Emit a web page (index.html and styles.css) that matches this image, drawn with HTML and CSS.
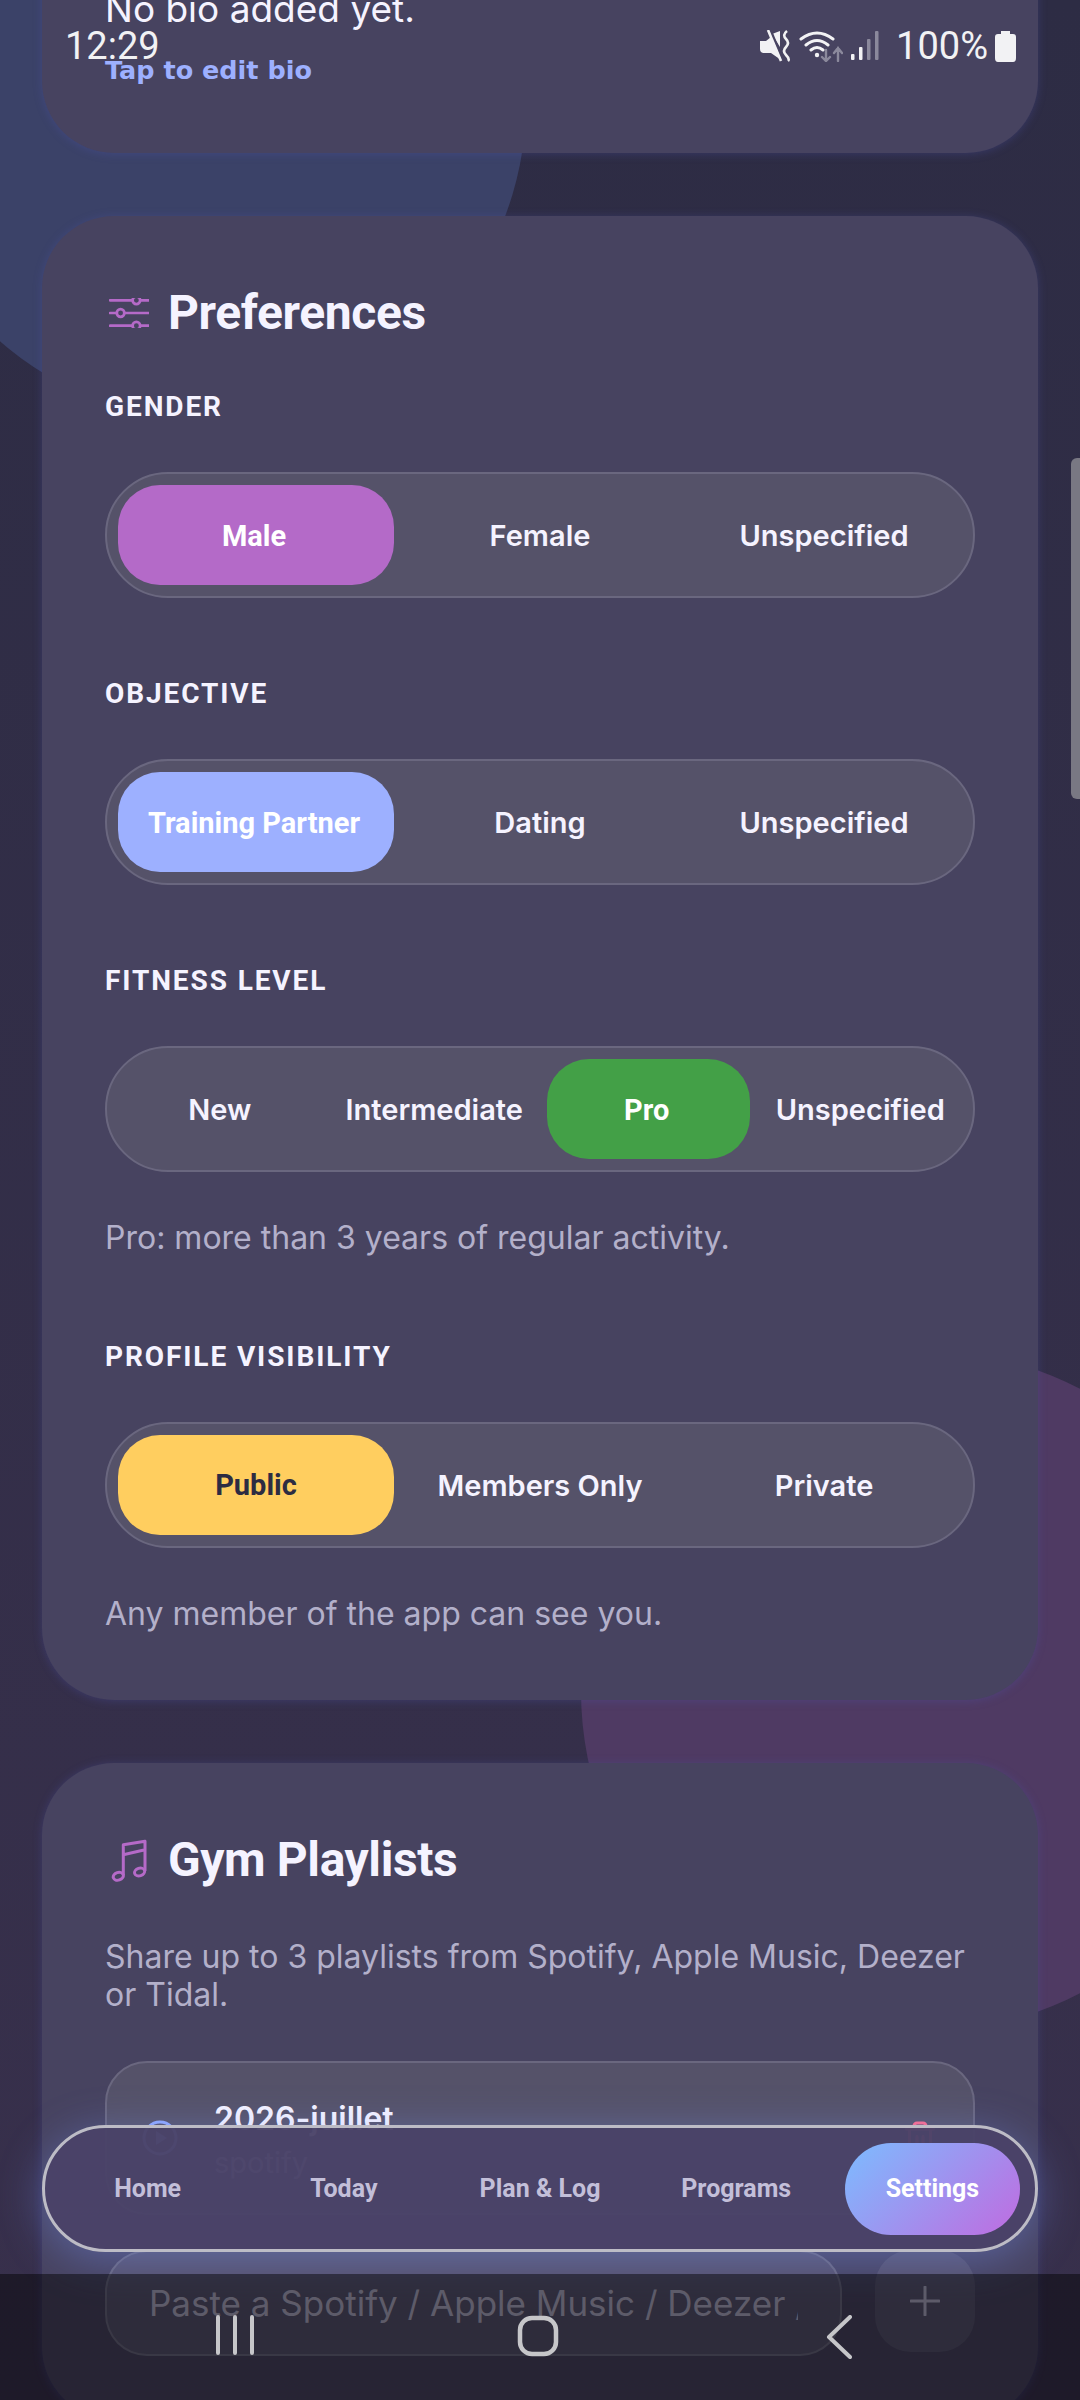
FILE: index.html
```html
<!DOCTYPE html>
<html lang="en">
<head>
  <meta charset="UTF-8">
  <title>Settings</title>
  <link rel="stylesheet" href="styles.css">
</head>
<body>
<div class="screen">
  <div class="blob blob-blue"></div>
  <div class="blob blob-purple"></div>

  <main class="content">
    <section class="card card-bio">
      <p class="bio-text">No bio added yet.</p>
      <p class="bio-link">Tap to edit bio</p>
    </section>

    <section class="card">
      <h2 class="card-title">
        <svg class="title-icon" viewBox="0 0 38 28" fill="none" stroke="#b56ac8" stroke-width="2.6" stroke-linecap="round">
          <path d="M1 4H22M30 4H38M1 16H7M15 16H38M1 28H22M30 28H38" transform="translate(0 -2)"/>
          <circle cx="26" cy="2" r="3.6"/>
          <circle cx="11" cy="14" r="3.6"/>
          <circle cx="26" cy="26" r="3.6"/>
        </svg>
        Preferences
      </h2>

      <div class="group">
        <h3 class="group-label">GENDER</h3>
        <div class="segmented">
          <span class="seg seg-purple">Male</span>
          <span class="seg">Female</span>
          <span class="seg">Unspecified</span>
        </div>
      </div>

      <div class="group">
        <h3 class="group-label">OBJECTIVE</h3>
        <div class="segmented">
          <span class="seg seg-blue">Training Partner</span>
          <span class="seg">Dating</span>
          <span class="seg">Unspecified</span>
        </div>
      </div>

      <div class="group">
        <h3 class="group-label">FITNESS LEVEL</h3>
        <div class="segmented">
          <span class="seg">New</span>
          <span class="seg">Intermediate</span>
          <span class="seg seg-green">Pro</span>
          <span class="seg">Unspecified</span>
        </div>
        <p class="hint">Pro: more than 3 years of regular activity.</p>
      </div>

      <div class="group">
        <h3 class="group-label">PROFILE VISIBILITY</h3>
        <div class="segmented">
          <span class="seg seg-yellow">Public</span>
          <span class="seg">Members Only</span>
          <span class="seg">Private</span>
        </div>
        <p class="hint">Any member of the app can see you.</p>
      </div>
    </section>

    <section class="card">
      <h2 class="card-title">
        <svg class="title-icon music-icon" viewBox="0 0 38 44" fill="none" stroke="#b56ac8" stroke-width="3" stroke-linejoin="round">
          <path d="M13.3 37V6.7L35 3.3V33M13.3 16.7L35 11.7"/>
          <ellipse cx="8.3" cy="38.3" rx="5.2" ry="3.8" transform="rotate(-18 8.3 38.3)"/>
          <ellipse cx="29.6" cy="34" rx="5.2" ry="3.8" transform="rotate(-18 29.6 34)"/>
        </svg>
        Gym Playlists
      </h2>
      <p class="playlist-intro">Share up to 3 playlists from Spotify, Apple Music, Deezer or Tidal.</p>

      <div class="playlist-item">
        <svg class="play-icon" viewBox="0 0 36 36" fill="none" stroke="#8fa8ff" stroke-width="3">
          <circle cx="18" cy="18" r="16"/>
          <path d="M14 11L25 18L14 25Z" fill="#8fa8ff" stroke="none"/>
        </svg>
        <div class="playlist-info">
          <div class="playlist-name">2026-juillet</div>
          <div class="playlist-source">spotify</div>
        </div>
        <svg class="trash-icon" viewBox="0 0 24 24" fill="none" stroke="#ff6b8b" stroke-width="2" stroke-linecap="round" stroke-linejoin="round">
          <path d="M3 6h18M19 6v14a2 2 0 0 1-2 2H7a2 2 0 0 1-2-2V6M8 6V4a2 2 0 0 1 2-2h4a2 2 0 0 1 2 2v2M10 11v6M14 11v6"/>
        </svg>
      </div>

      <div class="add-row">
        <input class="add-input" type="text" placeholder="Paste a Spotify / Apple Music / Deezer / Tidal link">
        <button class="add-btn">
          <svg viewBox="0 0 30 30" width="30" height="30" stroke="#aaa7bf" stroke-width="3" stroke-linecap="round">
            <path d="M15 1V29M1 15H29"/>
          </svg>
        </button>
      </div>
    </section>
  </main>

  <div class="scrollbar"></div>

  <div class="status-bar">
    <span class="clock">12:29</span>
    <div class="status-right">
      <svg width="32" height="32" viewBox="0 0 32 32" fill="#f2f2f4">
        <path d="M1 11H7L12 7L22 26V30L12 23H5Q1 23 1 19Z"/>
        <path d="M13 4L21 1V17Z"/>
        <path d="M12 1L24 31" stroke="#484461" stroke-width="2.4"/>
        <path d="M9 0L22 31" stroke="#f2f2f4" stroke-width="2.6"/>
        <path d="M28 1Q23 5 27 9T27 17T27 25T29 31" fill="none" stroke="#f2f2f4" stroke-width="2.6"/>
      </svg>
      <svg width="44" height="32" viewBox="0 0 44 32" fill="none" stroke="#f2f2f4" stroke-width="3" stroke-linecap="round">
        <path d="M2 9Q18 -3 34 9M7 15Q18 6 29 15M12 20Q18 15 24 20"/>
        <circle cx="18" cy="25" r="2.2" fill="#f2f2f4" stroke="none"/>
        <path d="M27 20V31M23 27L27 31L31 27M39 31V18M35 23L39 18L43 23" stroke="#8b899c" stroke-width="2.4"/>
      </svg>
      <svg class="signal" width="28" height="30" viewBox="0 0 28 30">
        <rect x="0" y="23" width="3.5" height="6" rx="1" fill="#f2f2f4"/>
        <rect x="8" y="16" width="3.5" height="13" rx="1" fill="#f2f2f4"/>
        <rect x="16" y="8" width="3.5" height="21" rx="1" fill="#8b899c"/>
        <rect x="24" y="0" width="3.5" height="29" rx="1" fill="#8b899c"/>
      </svg>
      <span class="battery-text">100%</span>
      <svg width="21" height="32" viewBox="0 0 21 32" fill="#f2f2f4">
        <path d="M6 1H15V4H18Q21 4 21 7V28Q21 32 18 32H3Q0 32 0 28V7Q0 4 3 4H6Z"/>
      </svg>
    </div>
  </div>

  <nav class="bottom-nav">
    <span class="nav-item">Home</span>
    <span class="nav-item">Today</span>
    <span class="nav-item">Plan &amp; Log</span>
    <span class="nav-item">Programs</span>
    <span class="nav-item nav-active">Settings</span>
  </nav>

  <div class="system-bar">
    <svg width="40" height="40" viewBox="0 0 40 40" stroke="#c6c6c9" stroke-width="4" stroke-linecap="round">
      <path d="M3 2V38M20 2V38M37 2V38"/>
    </svg>
    <svg class="home-key" width="42" height="42" viewBox="0 0 42 42" fill="none" stroke="#c6c6c9" stroke-width="4.5">
      <rect x="3" y="3" width="36" height="36" rx="12"/>
    </svg>
    <svg width="26" height="44" viewBox="0 0 26 44" fill="none" stroke="#c6c6c9" stroke-width="4" stroke-linecap="round" stroke-linejoin="round">
      <path d="M24 2L3 22L24 42"/>
    </svg>
  </div>
</div>
</body>
</html>
```
FILE: styles.css
```css
* {
  box-sizing: border-box;
}

html, body {
  margin: 0;
  padding: 0;
}

body {
  font-family: "Inter", "Noto Sans", sans-serif;
  color: #f5f3ff;
}

.screen {
  position: relative;
  width: 1080px;
  height: 2400px;
  overflow: hidden;
  background: linear-gradient(180deg, #2d2c44 0%, #38304c 100%);
}

/* background circles */
.blob {
  position: absolute;
  border-radius: 50%;
}

.blob-blue {
  left: -108px;
  top: -214px;
  width: 634px;
  height: 634px;
  background: #3b4268;
}

.blob-purple {
  left: 581px;
  top: 1350px;
  width: 682px;
  height: 682px;
  background: #4f3a63;
}

.content {
  position: relative;
  display: flex;
  flex-direction: column;
  gap: 63px;
  margin-top: -100px;
  padding: 0 42px;
}

.card {
  padding: 73px 63px 63px;
  background: #474360;
  border-radius: 72px;
  box-shadow: 0 1px 10px rgba(84, 88, 190, 0.28);
}

.card-bio {
  padding-top: 89px;
  padding-bottom: 65px;
}

.bio-text {
  margin: 0;
  font-size: 37px;
  line-height: 40px;
}

.bio-link {
  margin: 23px 0 0;
  font-family: "DejaVu Sans", sans-serif;
  font-size: 25.5px;
  line-height: 36px;
  font-weight: 700;
  color: #9db0ff;
}

.card-title {
  display: flex;
  align-items: center;
  gap: 19px;
  margin: 0;
  font-family: "Roboto", sans-serif;
  font-size: 48px;
  line-height: 48px;
  font-weight: 700;
  letter-spacing: -0.4px;
}

.title-icon {
  width: 40px;
  height: 30px;
  margin-left: 4px;
  flex-shrink: 0;
}

.music-icon {
  height: 44px;
}

.group {
  margin-top: 79px;
}

.card-title + .group {
  margin-top: 53px;
}

.group-label {
  margin: 0 0 48px;
  font-family: "Roboto", sans-serif;
  font-size: 28px;
  line-height: 34px;
  font-weight: 700;
  letter-spacing: 1.9px;
}

/* segmented control */
.segmented {
  display: flex;
  gap: 8px;
  height: 126px;
  padding: 11px;
  background: #555269;
  border: 2px solid #6a677f;
  border-radius: 63px;
}

.seg {
  flex: 1;
  display: flex;
  align-items: center;
  justify-content: center;
  padding: 0 16px;
  border-radius: 42px;
  font-size: 29px;
  font-weight: 600;
  white-space: nowrap;
}

.seg-purple,
.seg-blue,
.seg-green,
.seg-yellow {
  font-family: "Roboto", sans-serif;
  font-weight: 700;
  color: #fff;
}

.seg-purple,
.seg-blue,
.seg-green {
  padding: 1px 18px 0 14px;
}

.seg-purple {
  background: #b46ac8;
}

.seg-blue {
  background: #9db0ff;
}

.seg-green {
  background: #43a047;
}

.seg-yellow {
  background: #ffce5f;
  color: #2d2c42;
}

.hint {
  margin: 47px 0 0;
  padding-bottom: 4px;
  font-size: 32px;
  line-height: 38px;
  color: #b3b0ca;
}

.playlist-intro {
  margin: 54px 0 47px;
  font-size: 32px;
  line-height: 38px;
  color: #b3b0ca;
}

.playlist-item {
  display: flex;
  align-items: center;
  height: 154px;
  padding: 0 35px;
  background: #555269;
  border: 2px solid #6a677f;
  border-radius: 42px;
}

.play-icon {
  width: 36px;
  height: 36px;
  flex-shrink: 0;
}

.playlist-info {
  flex: 1;
  margin-left: 36px;
}

.playlist-name {
  font-size: 32px;
  line-height: 48px;
  font-weight: 600;
}

.playlist-source {
  margin-top: 2px;
  font-size: 29px;
  line-height: 36px;
  color: #b3b0ca;
}

.trash-icon {
  width: 36px;
  height: 36px;
  flex-shrink: 0;
}

.add-row {
  display: flex;
  gap: 33px;
  margin-top: 35px;
}

.add-input {
  flex: 1;
  min-width: 0;
  height: 106px;
  padding: 0 42px;
  font-family: "Inter", sans-serif;
  font-size: 35px;
  color: #f5f3ff;
  background: rgba(255, 255, 255, 0.08);
  border: 2px solid rgba(255, 255, 255, 0.12);
  border-radius: 42px;
}

.add-input::placeholder {
  color: #aaa7bf;
  opacity: 1;
}

.add-btn {
  display: flex;
  align-items: center;
  justify-content: center;
  width: 100px;
  height: 102px;
  padding: 0;
  background: rgba(255, 255, 255, 0.08);
  border: none;
  border-radius: 36px;
}

/* overlay pieces */
.scrollbar {
  position: absolute;
  top: 458px;
  right: 0;
  width: 9px;
  height: 341px;
  background: #797883;
  border-radius: 6px 0 0 6px;
}

.status-bar {
  position: absolute;
  top: 25px;
  left: 65px;
  right: 64px;
  display: flex;
  align-items: center;
  justify-content: space-between;
  height: 42px;
  font-family: "Roboto", sans-serif;
  font-size: 38px;
  color: #f2f2f4;
}

.status-right {
  display: flex;
  align-items: center;
}

.status-right svg {
  margin-right: 8px;
}

.status-right .signal {
  margin-right: 17px;
}

.battery-text {
  margin-right: 7px;
}

.status-right svg:last-child {
  margin-right: 0;
}

.bottom-nav {
  position: absolute;
  left: 42px;
  top: 2125px;
  display: flex;
  gap: 21px;
  align-items: center;
  width: 996px;
  height: 127px;
  padding: 0 15px;
  background: rgba(74, 67, 104, 0.96);
  border: 3px solid #bdbcc6;
  border-radius: 64px;
  box-shadow: 0 8px 44px rgba(120, 150, 255, 0.38);
}

.nav-item {
  flex: 1;
  display: flex;
  align-items: center;
  justify-content: center;
  height: 92px;
  border-radius: 46px;
  font-family: "Roboto", sans-serif;
  font-size: 25px;
  font-weight: 700;
  color: #c3bfd9;
}

.nav-active {
  background: linear-gradient(135deg, #7cbcff 0%, #c06be0 100%);
  color: #fff;
}

.system-bar {
  position: absolute;
  left: 0;
  right: 0;
  bottom: 0;
  height: 126px;
  display: flex;
  align-items: flex-start;
  justify-content: space-between;
  padding: 41px 228px 0 215px;
  background: rgba(0, 0, 0, 0.45);
}

.home-key {
  margin-right: 6px;
}
```
